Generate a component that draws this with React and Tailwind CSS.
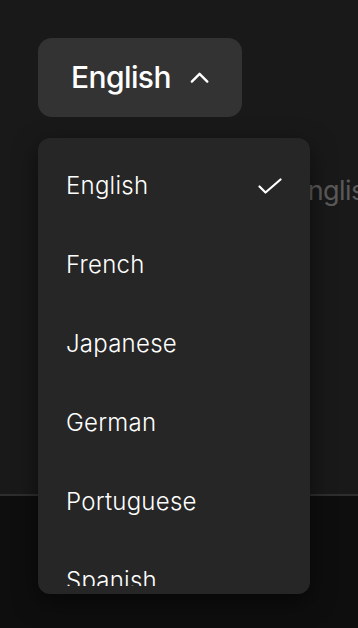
import React from "react";

const items = ["English", "French", "Japanese", "German", "Portuguese", "Spanish"];

export default function App() {
  return (
    <div
      className="relative w-[358px] h-[628px] overflow-hidden bg-[#0e0e0e]"
      style={{ fontFamily: "Inter, 'Noto Sans', sans-serif" }}
    >
      <div className="h-[496px] bg-[#191919] border-b-2 border-[#2e2e2e] pt-[38px] pl-[38px]">
        <button className="flex items-center gap-[19px] h-[79px] w-[204px] pl-[33px] pr-[33px] rounded-[14px] bg-[#333333] text-white text-[30px] font-medium tracking-[-0.02em]">
          <span>English</span>
          <svg width="21" height="13" viewBox="0 0 21 13" fill="none" stroke="white" strokeWidth="2.6" strokeLinecap="round" strokeLinejoin="round">
            <path d="M2 11 L10.5 2.5 L19 11" />
          </svg>
        </button>
        <div className="mt-[60px] ml-[254px] text-[27px] text-[#5a5a5a] tracking-[-0.02em] leading-none">
          English
        </div>
      </div>

      <div className="absolute left-[38px] top-[138px] w-[272px] h-[456px] rounded-[12px] bg-[#262626] p-2 shadow-[0_8px_24px_rgba(0,0,0,0.5)]">
        <div className="h-full overflow-hidden">
          {items.map((it, i) => (
            <div key={it} className="flex items-center justify-between h-[79px] pl-[20px] pr-[20px] text-white text-[24px] font-light tracking-[0.01em]">
              <span>{it}</span>
              {i === 0 && (
                <svg width="24" height="16" viewBox="0 0 24 16" fill="none" stroke="white" strokeWidth="2.2" strokeLinecap="round" strokeLinejoin="round">
                  <path d="M1.5 8.5 L7.5 14.5 L22.5 1.5" />
                </svg>
              )}
            </div>
          ))}
        </div>
      </div>
    </div>
  );
}
